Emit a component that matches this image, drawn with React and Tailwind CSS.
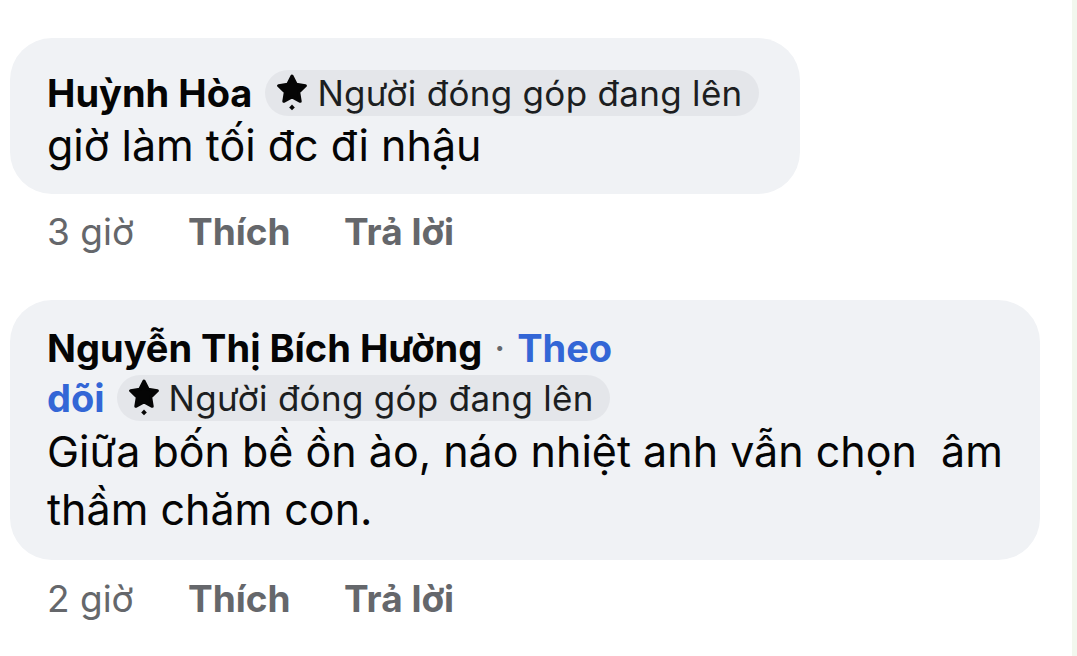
import React from 'react';

const StarIcon = () => (
    <svg width="30" height="38" viewBox="0 0 30 38" className="shrink-0 -mr-[2px]">
        <path
            d="M15 2 L19.2 10.3 L28.4 11.7 L21.7 18.1 L23.2 27.3 L15 23 L6.8 27.3 L8.3 18.1 L1.6 11.7 L10.8 10.3 Z"
            fill="#050505"
            stroke="#050505"
            strokeWidth="3"
            strokeLinejoin="round"
        />
        <path d="M15 30.5 L17.8 33.4 L15 36.3 L12.2 33.4 Z" fill="#050505" />
    </svg>
);

const Badge = () => (
    <span className="inline-flex items-center h-[46px] rounded-full bg-[#e4e6ea] pl-[12px] pr-[16px] gap-[12px]">
        <StarIcon />
        <span className="text-[35px] leading-none text-[#1c1e21] tracking-[0.3px]">Người đóng góp đang lên</span>
    </span>
);

const Actions = ({ time, className }) => (
    <div className={`flex items-center h-[40px] pl-[37px] text-[37px] text-[#65676b] ${className}`}>
        <span className="w-[141px]">{time}</span>
        <span className="font-bold w-[156px]">Thích</span>
        <span className="font-bold">Trả lời</span>
    </div>
);

const App = () => {
    return (
        <div className="w-[1077px] h-[656px] bg-white flex overflow-hidden" style={{ fontFamily: 'Inter, "Noto Sans", sans-serif' }}>
            <div className="flex-1 flex flex-col pl-[10px] pt-[38px]">
                {/* Bình luận 1 */}
                <div className="w-[790px] rounded-[42px] bg-[#f0f2f5] pl-[37px] pt-[32px] pb-[22px]">
                    <div className="flex items-center h-[46px] gap-[13px]">
                        <span className="text-[38px] font-bold text-[#050505] leading-none">Huỳnh Hòa</span>
                        <Badge />
                    </div>
                    <div className="mt-[2px] text-[43px] leading-[54px] text-[#050505]">giờ làm tối đc đi nhậu</div>
                </div>
                <Actions time="3 giờ" className="mt-[18px]" />

                {/* Bình luận 2 */}
                <div className="w-[1030px] mt-[48px] rounded-[42px] bg-[#f0f2f5] pl-[37px] pr-[20px] pt-[25px] pb-[22px]">
                    <div className="flex items-center h-[46px] mb-[4px]">
                        <span className="text-[38px] font-bold text-[#050505] leading-none">Nguyễn Thị Bích Hường</span>
                        <span className="text-[38px] text-[#65676b] leading-none mx-[12px]">·</span>
                        <span className="text-[38px] font-bold text-[#3366d6] leading-none">Theo</span>
                    </div>
                    <div className="flex items-center h-[46px] gap-[12px]">
                        <span className="text-[38px] font-bold text-[#3366d6] leading-none">dõi</span>
                        <Badge />
                    </div>
                    <div className="mt-[1px] text-[43px] leading-[58px] text-[#050505] whitespace-nowrap">
                        Giữa bốn bề ồn ào, náo nhiệt anh vẫn chọn&nbsp; âm<br />thầm chăm con.
                    </div>
                </div>
                <Actions time="2 giờ" className="mt-[19px]" />
            </div>
            <div className="w-[5px] bg-[#f2f7ee]" />
        </div>
    );
};

export default App;
